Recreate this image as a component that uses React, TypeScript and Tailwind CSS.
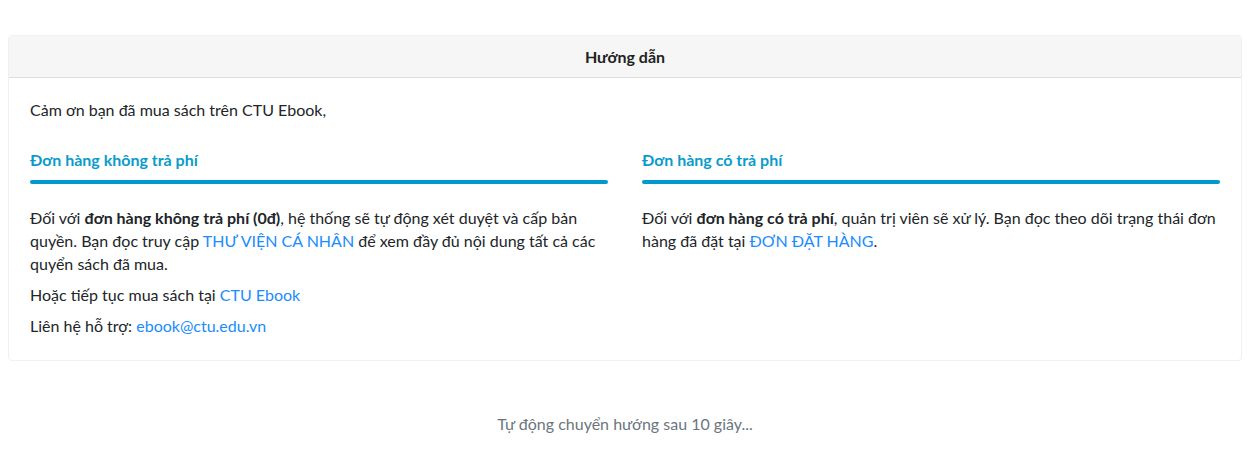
export default function App() {
  return (
    <div
      className="min-h-[472px] bg-white pl-2 pr-[14px] pt-[35px] text-[16px] text-[#212529]"
      style={{ fontFamily: 'Lato, "Noto Sans", sans-serif' }}
    >
      <div className="rounded border border-[#f0f0f0] bg-white">
        <div className="flex h-[42px] items-center justify-center rounded-t border-b border-[#dddddd] bg-[#f6f6f6] font-bold text-[#222]">
          Hướng dẫn
        </div>
        <div className="px-[21px] pb-[23px] pt-[20px]">
          <p className="leading-[23px]">Cảm ơn bạn đã mua sách trên CTU Ebook,</p>
          <div className="mt-[27px] grid grid-cols-2 gap-[34px]">
            <div>
              <h3 className="leading-[23px] font-bold text-[#0a9bcb]">Đơn hàng không trả phí</h3>
              <div className="mt-[9px] h-1 rounded-sm bg-[#0099cc]" />
              <div className="mt-[22px] space-y-2 leading-[23px]">
                <p>
                  Đối với <b>đơn hàng không trả phí (0đ)</b>, hệ thống sẽ tự động xét duyệt và cấp bản quyền. Bạn
                  đọc truy cập <a className="text-[#1a8cff]">THƯ VIỆN CÁ NHÂN</a> để xem đầy đủ nội dung tất cả các
                  quyển sách đã mua.
                </p>
                <p>
                  Hoặc tiếp tục mua sách tại <a className="text-[#1a8cff]">CTU Ebook</a>
                </p>
                <p>
                  Liên hệ hỗ trợ: <a className="text-[#1a8cff]">ebook@ctu.edu.vn</a>
                </p>
              </div>
            </div>
            <div>
              <h3 className="leading-[23px] font-bold text-[#0a9bcb]">Đơn hàng có trả phí</h3>
              <div className="mt-[9px] h-1 rounded-sm bg-[#0099cc]" />
              <div className="mt-[22px] leading-[23px]">
                <p>
                  Đối với <b>đơn hàng có trả phí</b>, quản trị viên sẽ xử lý. Bạn đọc theo dõi trạng thái đơn hàng
                  đã đặt tại <a className="text-[#1a8cff]">ĐƠN ĐẶT HÀNG</a>.
                </p>
              </div>
            </div>
          </div>
        </div>
      </div>
      <p className="mt-[51px] text-center text-[#6c757d]">Tự động chuyển hướng sau 10 giây...</p>
    </div>
  )
}
